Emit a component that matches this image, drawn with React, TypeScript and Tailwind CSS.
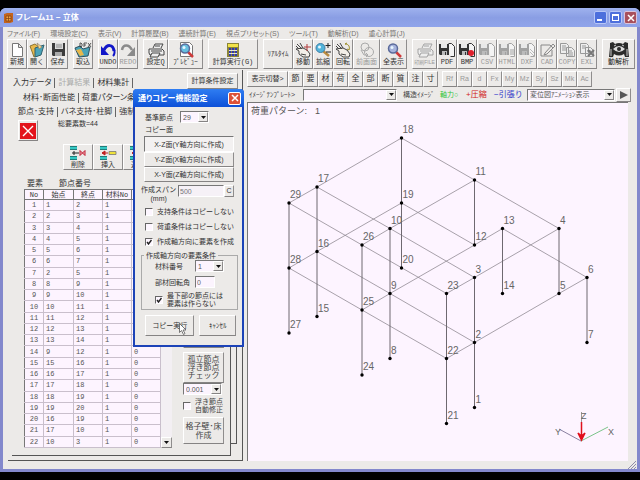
import React from "react";

const cjk = "font-['Liberation_Sans','Noto_Sans_CJK_JP',sans-serif]";
const mono = "font-['Liberation_Mono','Noto_Sans_CJK_JP',monospace]";
const raised = "border border-t-white border-l-white border-r-[#8f8d8d] border-b-[#858383] bg-[#eceae8]";

/* ---------- icons ---------- */

type IconProps = { name: string };

function Floppy({ c = "#333" }: { c?: string }) {
  return (
    <g>
      <path d="M1 2h10v11H2l-1-1z" fill={c} />
      <path d="M3 2h6v4H3z" fill="#e8e8e8" />
      <path d="M4 9h5v4H4z" fill="#bbb" />
      <path d="M7 10h1v3H7z" fill={c} />
    </g>
  );
}

function SheetBehind({ c }: { c: string }) {
  return <path d="M10.500 1.500h3l3 3v10h-4" fill="#f4f4f4" stroke={c} />;
}

function Hand({ children }: { children?: React.ReactNode }) {
  return (
    <g fill="none" stroke="#444" strokeWidth="1">
      <path d="M2 4l3 3M3 2l4 4M6 1l3 5M2 7l3 2v3l4 3h6l1-3-3-4-4-2z" fill="#f3efe8" />
      <path d="M5 4l3 3M7 12l5 1" />
      {children}
    </g>
  );
}

function Icon({ name }: IconProps) {
  const grey = "#a2a2a2";
  let body: React.ReactNode = null;
  switch (name) {
    case "new":
      body = <path d="M4.500 1.500h6l4 4v9h-10zM10.500 1.500v4h4" fill="#fff" stroke="#777" />;
      break;
    case "open":
      body = (
        <g>
          <path d="M2 4l5-2 4 3 1 8-6 2z" fill="#e9b84a" stroke="#8b7435" />
          <path d="M7 6l9-3-3 10-6 2z" fill="#4aa3b8" stroke="#31616e" />
          <path d="M9 1l5 4-3 2z" fill="#f7d88c" stroke="#876" strokeWidth=".6" />
        </g>
      );
      break;
    case "save":
      body = (
        <g>
          <path d="M3 1h13v13H4l-1-1z" fill="#3b3b3b" />
          <path d="M6 1h8v6H6z" fill="#ddd" />
          <path d="M6 10h7v4H6z" fill="#aaa" />
          <path d="M7 3h6M7 5h6" stroke="#777" strokeWidth=".8" />
        </g>
      );
      break;
    case "import":
      body = (
        <g>
          <path d="M1 6l5-2 3 3 7-2-2 9-9 1z" fill="#4aa3b8" stroke="#31515e" />
          <path d="M2 8l4 6 4-1-3-6z" fill="#e9b84a" />
          <path d="M6 1v4h1l1-1V2L7 1zM10 5V1h3M10 3h2M14 1l3 4M17 1l-3 4" fill="none" stroke="#333" strokeWidth=".8" />
        </g>
      );
      break;
    case "undo":
      body = (
        <g fill="none" stroke="#1015c8" strokeWidth="3">
          <path d="M5 8c3-6 9-6 10 1" />
          <path d="M2 4v9h8z" fill="#1015c8" stroke="none" />
          <path d="M15 7c1 3 1 5-1 7" strokeWidth="2" />
        </g>
      );
      break;
    case "redo":
      body = (
        <g fill="none" stroke="#8a8a8a" strokeWidth="2.500">
          <path d="M3 8c1-6 7-6 10 0" />
          <path d="M16 5v9H8z" fill="#8a8a8a" stroke="none" />
        </g>
      );
      break;
    case "print":
    case "print-off": {
      const c = name === "print" ? "#444" : grey;
      body = (
        <g fill="#eee" stroke={c}>
          <path d="M6 6l2-4h8l-2 4M2 7h13l2 2v4H3l-1-2z" />
          <path d="M5 11h8l-2 4H3zM8 4h5M4 9h11" />
        </g>
      );
      break;
    }
    case "preview":
    case "zoomall":
      body = (
        <g>
          {name === "preview" && <path d="M3.500 .5h9l3 3v11h-12z" fill="#fff" stroke="#777" />}
          <path d="M11 10l5 5" stroke="#cf3b3b" strokeWidth="2.500" />
          <circle cx="8" cy="6.500" r="4.500" fill={name === "preview" ? "#67bfe0" : "#a6b3dc"} stroke="#5a6a9a" strokeWidth="1.500" />
          <circle cx="7" cy="5.500" r="1.500" fill="#e7f6ff" />
        </g>
      );
      break;
    case "calc":
      body = (
        <g>
          <path d="M3 1h12v14H3z" fill="#8a8438" />
          <path d="M4 2h10v3H4z" fill="#f2e34a" />
          <path d="M5 7h2M8 7h2M11 7h2M5 10h2M8 10h2M11 10h2M5 13h2M8 13h2M11 13h2" stroke="#3038b0" strokeWidth="2" />
          <path d="M5 8.500h8M5 11.500h8" stroke="#fff" strokeWidth=".8" />
        </g>
      );
      break;
    case "move":
      body = <Hand><path d="M13 2v7M10 5h7" stroke="#b03a3a" /></Hand>;
      break;
    case "rotate":
      body = <Hand><path d="M11 2c4 0 5 3 4 6M11 2l2-1M15 8l-2-1" stroke="#9a8a20" /></Hand>;
      break;
    case "zoom":
      body = (
        <g>
          <path d="M9 9l6 5" stroke="#b88a40" strokeWidth="2.500" />
          <circle cx="6.500" cy="6" r="4.500" fill="#52b4da" stroke="#3f7fa8" />
          <circle cx="5.500" cy="5" r="1.500" fill="#e7f6ff" />
          <path d="M14 1v5M11.500 3.500h5M12 10h5" stroke="#222" />
        </g>
      );
      break;
    case "prev":
      body = (
        <g fill="none" stroke="#aaa">
          <circle cx="7" cy="5" r="4" />
          <circle cx="11" cy="10" r="4.500" />
          <path d="M3 8l3 5h4M8 11l2 2-2 2" />
        </g>
      );
      break;
    case "pdf":
      body = <g><SheetBehind c="#333" /><Floppy c="#333" /></g>;
      break;
    case "bmp":
      body = <g><SheetBehind c="#333" /><Floppy c="#333" /><circle cx="13" cy="11" r="3" fill="#e0202c" /></g>;
      break;
    case "csv":
      body = <g><SheetBehind c={grey} /><Floppy c={grey} /></g>;
      break;
    case "html":
      body = <g><SheetBehind c={grey} /><Floppy c={grey} /><path d="M12 8h4M12 10h4M12 12h4" stroke={grey} /></g>;
      break;
    case "dxf":
      body = <g><SheetBehind c={grey} /><Floppy c={grey} /><path d="M12 7l4 4M12 10l4 4" stroke="#bbb" /></g>;
      break;
    case "cad":
      body = <path d="M3 3h9M3 3v11h11V8M7 11l8-9 2 2-8 8-3 1zM12 3l3 3" fill="none" stroke="#888" />;
      break;
    case "copy":
      body = <path d="M2.500 1.500h6l2 2v8h-8zM8.500 5.500h5l3 3v6h-8zM4 4h4M4 6h4M4 8h4M10 9h4M10 11h5M10 13h5" fill="#eee" stroke="#999" />;
      break;
    case "exl":
      body = (
        <g>
          <path d="M2.500 1.500h6l2 2v8h-8zM7.500 5.500h5l3 3v6h-8zM4 4h4M4 6h4M9 9h4" fill="#eee" stroke="#999" />
          <path d="M10 8l6 6M16 8l-6 6" stroke="#777" strokeWidth="2" />
        </g>
      );
      break;
    case "delete":
    case "insert":
    case "add":
      body = (
        <g>
          <path d="M1 1h7v4H1zM1 11h7v4H1z" fill="#35c8c4" />
          <path d="M1 1.500h7M1 4.500h7M1 11.500h7M1 14.500h7" stroke="#1d6a68" strokeWidth=".8" />
          {name === "delete" ? (
            <g fill="none">
              <path d="M3 8h7M5 6v4" stroke="#222" />
              <path d="M11 5.500v5l5-5v5z" stroke="#c01c30" fill="#f3b0b8" />
            </g>
          ) : (
            <g>
              <path d="M3 8h6M3 8l3-2v4z" stroke="#c02020" fill="#c02020" />
              <path d="M10 6.500h7v3h-7z" fill="#efe23a" stroke="#777" strokeWidth=".8" />
            </g>
          )}
        </g>
      );
      break;
  }
  return (
    <svg viewBox="0 0 18 16" className="h-4 w-[18px] shrink-0" aria-hidden="true">
      {body}
    </svg>
  );
}

/* ---------- shared controls ---------- */

function Select({ label, value, className = "" }: { label: string; value: string; className?: string }) {
  return (
    <div className={`flex items-stretch border border-t-[#777] border-l-[#777] border-r-white border-b-white bg-[#fcf4fe] ${className}`}>
      <select aria-label={label} className="min-w-0 flex-1 appearance-none bg-transparent pl-[2px] text-[7px] leading-[9px] text-[#555] outline-none">
        <option>{value}</option>
      </select>
      <span aria-hidden="true" className={`flex w-[10px] items-center justify-center ${raised}`}>
        <svg viewBox="0 0 5 3" className="h-[3px] w-[5px]"><path d="M0 0h5L2.500 3z" fill="#111" /></svg>
      </span>
    </div>
  );
}

function Check({ label, checked = false, className = "" }: { label: React.ReactNode; checked?: boolean; className?: string }) {
  return (
    <label className={`flex items-center gap-1 ${className}`}>
      <input type="checkbox" defaultChecked={checked} className="peer sr-only" />
      <span className="flex h-2 w-2 shrink-0 items-center justify-center border border-t-[#666] border-l-[#666] border-r-white border-b-white bg-[#fdf6ff] text-transparent peer-checked:text-[#222]">
        <svg viewBox="0 0 6 6" className="h-[6px] w-[6px]"><path d="M1 3l1.500 2L5.500 1" fill="none" stroke="currentColor" strokeWidth="1.400" /></svg>
      </span>
      <span>{label}</span>
    </label>
  );
}

/* ---------- toolbar ---------- */

type Tool = { icon?: string; label: string; w: string; off?: boolean; size?: string };

const toolGroups: Tool[][] = [
  [
    { icon: "new", label: "新規", w: "w-[20px]" },
    { icon: "open", label: "開く", w: "w-[20px]" },
    { icon: "save", label: "保存", w: "w-[21px]" },
  ],
  [{ icon: "import", label: "取込", w: "w-[20px]" }],
  [
    { icon: "undo", label: "UNDO", w: "w-[20px]" },
    { icon: "redo", label: "REDO", w: "w-[20px]", off: true },
  ],
  [
    { icon: "print", label: "設定Q", w: "w-[25px]" },
    { icon: "preview", label: "ﾌﾟﾚﾋﾞｭｰ", w: "w-[35px]" },
  ],
  [{ icon: "calc", label: "計算実行(G)", w: "w-[50px]" }],
  [
    { label: "ﾘｱﾙﾀｲﾑ", w: "w-[30px]" },
    { icon: "move", label: "移動", w: "w-[20px]" },
    { icon: "zoom", label: "拡縮", w: "w-[20px]" },
    { icon: "rotate", label: "回転", w: "w-[20px]" },
    { icon: "prev", label: "前画面", w: "w-[27px]", off: true },
    { icon: "zoomall", label: "全表示", w: "w-[27px]" },
  ],
  [
    { icon: "print-off", label: "印刷FILE", w: "w-[25px]", off: true, size: "text-[5px] font-['Liberation_Sans','Noto_Sans_CJK_JP',sans-serif]" },
    { icon: "pdf", label: "PDF", w: "w-[20px]" },
    { icon: "bmp", label: "BMP", w: "w-[20px]" },
    { icon: "csv", label: "CSV", w: "w-[20px]", off: true },
    { icon: "html", label: "HTML", w: "w-[20px]", off: true },
    { icon: "dxf", label: "DXF", w: "w-[20px]", off: true },
    { icon: "cad", label: "CAD", w: "w-[20px]", off: true },
    { icon: "copy", label: "COPY", w: "w-[20px]", off: true },
    { icon: "exl", label: "EXL", w: "w-[20px]", off: true },
  ],
];

function Toolbar() {
  return (
    <div className={`flex h-[30px] shrink-0 items-stretch gap-[5px] pr-[2px] pl-1 ${mono}`}>
      {toolGroups.map((group, i) => (
        <div key={i} className="flex">
          {group.map((t) => (
            <button
              key={t.label}
              type="button"
              disabled={t.off}
              className={`flex flex-col items-center justify-center leading-[9px] whitespace-nowrap ${t.size ?? "text-[7px]"} ${t.w} ${raised} ${t.off ? "text-[#999]" : "text-[#333]"}`}
            >
              {t.icon && <Icon name={t.icon} />}
              {t.label}
            </button>
          ))}
        </div>
      ))}
      <button type="button" className={`flex flex-1 flex-col items-center justify-center text-[7px] leading-[9px] text-[#222] ${raised}`}>
        <svg viewBox="0 0 24 17" className="h-[17px] w-6" aria-hidden="true">
          <path d="M3 2l3-1 2 2q4-2 8 0l2-2 3 1v4l1 10h-4l-1-3q-5 3-10 0l-1 3H2L3 6z" fill="#2b2b2b" />
          <path d="M6 8q6-6 12 0-6 6-12 0z" fill="#ddd" />
          <path d="M4 8v7M20 8v7M7 5l2-1M17 5l-2-1" stroke="#ccc" />
          <circle cx="12" cy="8" r="2" fill="#2b2b2b" />
        </svg>
        動解析
      </button>
    </div>
  );
}

/* ---------- left pane ---------- */

const elements: [number, number][] = [
  [1, 2], [2, 3], [3, 4], [4, 5], [5, 6], [6, 7], [2, 5], [8, 9], [9, 10], [10, 11], [11, 12],
  [12, 13], [13, 14], [9, 12], [15, 16], [16, 17], [17, 18], [18, 19], [19, 20], [16, 19], [17, 10], [10, 3],
];

function Tab({ children, off = false }: { children: React.ReactNode; off?: boolean }) {
  return (
    <button type="button" disabled={off} className={`border-r border-[#666] pr-[3px] whitespace-nowrap ${off ? "text-[#aaa]" : "text-[#333]"}`}>
      {children}
    </button>
  );
}

function ElementTable() {
  const cell = "border border-[#c9bfcc] p-0 pl-[2px] align-middle";
  const head = "border border-[#777] p-0 font-normal";
  return (
    <div className="flex h-[259px]">
      <table className={`h-[259px] w-[136px] table-fixed border-collapse bg-[#fdf4ff] text-[7px] leading-[8px] text-[#555] ${mono}`}>
        <colgroup>
          <col className="w-[19px]" /><col className="w-[30px]" /><col className="w-[29px]" /><col className="w-[29px]" /><col className="w-[29px]" />
        </colgroup>
        <thead>
          <tr className="h-[10px] whitespace-nowrap text-[#333]">
            <th className={head}>No</th><th className={head}>始点</th><th className={head}>終点</th><th className={head}>材料No</th><th className={head}>角度</th>
          </tr>
        </thead>
        <tbody>
          {elements.map(([a, b], i) => (
            <tr key={i}>
              <td className="border border-[#c9bfcc] border-l-[#777] p-0 text-center">{i + 1}</td>
              <td className={cell}>{a}</td>
              <td className={cell}>{b}</td>
              <td className={cell}>1</td>
              <td className={cell}>0</td>
            </tr>
          ))}
        </tbody>
      </table>
      <div className="flex w-[11px] flex-col justify-end bg-[#f3eff3]">
        <button type="button" aria-label="下へスクロール" className={`flex h-[11px] items-center justify-center ${raised}`}>
          <svg viewBox="0 0 5 3" className="h-[3px] w-[5px]"><path d="M0 0h5L2.500 3z" fill="#111" /></svg>
        </button>
      </div>
    </div>
  );
}

function LeftPane() {
  return (
    <section className="flex w-[244px] shrink-0 flex-col pb-2 pl-[5px] text-[8px] leading-[10px]">
      <div className="flex h-[391px] w-[235px] flex-col border-r border-b border-[#555]">
        <div className="flex h-[21px] items-center gap-[3px] pt-1 pl-[5px] [font-feature-settings:'palt']">
          <Tab>入力データ</Tab>
          <Tab off>計算結果</Tab>
          <Tab>材料集計</Tab>
          <button type="button" className={`mr-1 mb-1 ml-auto h-4 w-[51px] text-[7px] whitespace-nowrap text-[#333] ${raised}`}>計算条件設定</button>
        </div>
        <div className="flex min-h-0 flex-1">
          <div className="mb-1 ml-1 flex w-[219px] flex-col border-r border-b border-[#555]">
            <div className="flex h-[14px] items-center gap-[3px] overflow-hidden pl-[11px] [font-feature-settings:'palt']">
              <Tab>材料･断面性能</Tab>
              <Tab>荷重パターン条件</Tab>
            </div>
            <div className="flex h-[13px] items-center gap-[3px] overflow-hidden pl-[6px] [font-feature-settings:'palt']">
              <Tab>節点･支持</Tab>
              <Tab>バネ支持･柱脚</Tab>
              <Tab>強制変位</Tab>
            </div>
            <div className="flex gap-5 pt-[2px] pl-[6px]">
              <button type="button" aria-label="閉じる" className={`flex h-[21px] w-5 items-center justify-center ${raised}`}>
                <svg viewBox="0 0 16 16" className="h-4 w-4"><path d="M0 0h16v16H0z" fill="#e3141c" /><path d="M3 3l10 10M13 3L3 13" stroke="#fff" strokeWidth="1.400" /></svg>
              </button>
              <span className="text-[7px] leading-[8px] text-[#333]">総要素数=44</span>
            </div>
            <div className="mt-[3px] flex pl-[51px] text-[7px]">
              {[["delete", "削除"], ["insert", "挿入"], ["add", "追加"]].map(([icon, label]) => (
                <button key={icon} type="button" className={`flex h-[26px] w-[30px] flex-col items-center justify-center leading-[8px] text-[#333] ${raised}`}>
                  <Icon name={icon} />
                  {label}
                </button>
              ))}
            </div>
            <div className="flex pt-[9px] pl-[12px]">
              <div className="w-[159px] shrink-0">
                <div className="flex gap-4 pl-[3px] text-[#333]">
                  <span>要素</span><span>節点番号</span>
                </div>
                <ElementTable />
              </div>
              <div className="flex w-[41px] flex-col justify-end pb-1 text-[8px] text-[#444]">
                <button type="button" className={`mb-1 h-[24px] ${raised}`}>接続</button>
                <button type="button" className={`h-[31px] leading-[8px] ${raised}`}>孤立節点<br />浮き節点<br />チェック</button>
                <Select label="許容差" value="0.001" className="h-3 w-[39px]" />
                <Check label={<>浮き節点<br />自動修正</>} className="h-[22px] text-[7px] leading-[8px]" />
                <button type="button" className={`h-[27px] text-[8px] leading-[9px] whitespace-nowrap [font-feature-settings:'palt'] ${raised}`}>格子壁･床<br />作成</button>
              </div>
            </div>
          </div>
          <div className="mb-4 w-[6px] border-r border-b border-[#555]" />
        </div>
      </div>
    </section>
  );
}

/* ---------- right pane ---------- */

const nodes: Record<number, [number, number]> = {
  1: [474.5, 407.5], 2: [474.5, 342.5], 3: [474.5, 277.5], 4: [559, 228.5], 5: [559, 293.5], 6: [587, 277.5], 7: [587, 342.5],
  8: [390, 358.5], 9: [390, 293.5], 10: [390, 228.5], 11: [474.5, 180], 12: [474.5, 245], 13: [502.5, 228.5], 14: [502.5, 293.5],
  15: [317, 316.5], 16: [317, 251.5], 17: [317, 187], 18: [401.5, 138], 19: [401.5, 203], 20: [401.5, 268],
  21: [446.5, 423.5], 22: [446.5, 358.5], 23: [446.5, 293.5], 24: [362, 375], 25: [362, 310], 26: [362, 245],
  27: [289, 333], 28: [289, 268], 29: [289, 203],
};

const chains: number[][] = [
  [4, 11, 18, 17, 29, 26, 23, 3, 4], [17, 10, 3], [11, 10, 26],
  [12, 19, 16, 28, 25, 22, 2, 5, 6, 13, 12, 9, 25], [16, 9, 2],
];

const columns: number[][] = [
  [18, 19, 20], [11, 12], [17, 16, 15], [29, 28, 27], [10, 9, 8], [26, 25, 24], [3, 2, 1], [23, 22, 21], [4, 5], [13, 14], [6, 7],
];

const points = (ids: number[]) => ids.map((n) => nodes[n].join(",")).join(" ");

function FrameModel() {
  return (
    <svg viewBox="248 119 380 341" preserveAspectRatio="xMinYMin meet" className="min-h-0 w-full flex-1" fontFamily="Liberation Sans" fontSize="10" fill="#666">
      {chains.map((c, i) => <polyline key={i} points={points(c)} fill="none" stroke="#928c94" strokeWidth=".8" />)}
      {columns.map((c, i) => <polyline key={i} points={points(c)} fill="none" stroke="#6e6870" />)}
      {Object.entries(nodes).map(([id, [x, y]]) => (
        <g key={id}>
          <circle cx={x} cy={y} r="1.700" fill="#000" />
          <text x={x + 1} y={y - 5}>{id}</text>
        </g>
      ))}
      <path d="M581 441L559 429" stroke="#8a80a0" />
      <path d="M581 441L608 427" stroke="#7bc48a" />
      <path d="M581.500 422v17M578 433l3.500 7 3.500-7-3.500 3z" stroke="#e0101c" strokeWidth="1.500" fill="#e0101c" />
      <path d="M581.500 412v10" stroke="#999" />
      <g fontSize="9">
        <text x="581" y="419">Z</text>
        <text x="555" y="435">Y</text>
        <text x="608" y="435">X</text>
      </g>
    </svg>
  );
}

function RightPane() {
  return (
    <section className="flex min-w-0 flex-1 flex-col pb-2">
      <div className="flex h-[17px] items-stretch pt-[1px] text-[8px] leading-[10px] text-[#333]">
        <span className={`flex w-[41px] items-center justify-center text-[7px] whitespace-nowrap ${raised}`}>表示切替&gt;</span>
        {["節", "要", "材", "荷", "全", "部", "断", "質", "注", "寸"].map((t) => (
          <button key={t} type="button" className={`w-[15px] ${raised}`}>{t}</button>
        ))}
        <span className="w-1" />
        {["Rf", "Ra", "d", "Fx", "My", "Mz", "Sy", "Sz", "Mk", "Ac"].map((t) => (
          <button key={t} type="button" disabled className={`w-[15px] text-[7px] text-[#999] ${raised}`}>{t}</button>
        ))}
      </div>
      <div className="flex h-[15px] items-center text-[7px] leading-[10px] whitespace-nowrap text-[#444]">
        <span className="w-[56px] pl-[2px]">ｲﾒｰｼﾞﾃﾝﾌﾟﾚｰﾄ&gt;</span>
        <Select label="イメージテンプレート" value="" className="h-3 w-[94px]" />
        <span className="w-[43px] pl-[6px]">構造ｲﾒｰｼﾞ</span>
        <span className="w-[26px] text-[#2fc43a]">軸力○</span>
        <span className="w-[28px] text-[8px] text-[#d02020]">+圧縮</span>
        <span className="w-[33px] text-[8px] text-[#3038c8]">−引張り</span>
        <Select label="表示モード" value="変位図ｱﾆﾒｰｼｮﾝ表示" className="h-3 w-[88px]" />
        <button type="button" aria-label="再生" className={`ml-[1px] flex h-[14px] w-[15px] items-center justify-center ${raised}`}>
          <svg viewBox="0 0 8 8" className="h-2 w-2"><path d="M0 0l8 4-8 4z" fill="#555" /></svg>
        </button>
      </div>
      <div className="mr-[9px] flex min-h-0 flex-1 flex-col border-t border-l border-[#777] bg-[#fdf4ff]">
        <p className="flex h-4 items-center gap-2 pl-[3px] text-[9px] leading-3 text-[#555]"><span>荷重パターン:</span><span>1</span></p>
        <FrameModel />
      </div>
    </section>
  );
}

/* ---------- floating dialog ---------- */

function CopyDialog() {
  return (
    <div role="dialog" aria-label="通りコピー機能設定" className="absolute top-[89px] left-[133px] z-10 flex w-[111px] flex-col rounded-t border-2 border-t-0 border-[#1c43b8] bg-[#eceae8] text-[7px] leading-[9px] text-[#333]">
      <div className="-mx-[2px] flex h-[18px] items-center justify-between rounded-t bg-linear-to-b from-[#2f7df2] to-[#0d50d8] pr-[3px] pl-[5px] text-[8px] font-bold whitespace-nowrap text-white">
        <span className="[font-feature-settings:'palt']">通りコピー機能設定</span>
        <button type="button" aria-label="閉じる" className="flex h-[13px] w-[13px] items-center justify-center rounded-xs border border-white bg-[#dd5238]">
          <svg viewBox="0 0 8 8" className="h-2 w-2"><path d="M1 1l6 6M7 1L1 7" stroke="#fff" strokeWidth="1.500" /></svg>
        </button>
      </div>
      <div className="flex flex-col px-[6px] pt-1 pb-[9px]">
        <div className="flex items-center gap-[7px] pl-1">
          <span className="w-[28px]">基準節点</span>
          <Select label="基準節点" value="29" className="h-3 w-[29px]" />
        </div>
        <p className="py-[2px] pl-1">コピー面</p>
        <div className="flex flex-col pr-[2px] pl-[3px]">
          <button type="button" aria-pressed="true" className="h-4 border border-t-[#777] border-l-[#777] border-r-white border-b-white bg-[#f3f1f1] whitespace-nowrap">X-Z面(Y軸方向に作成)</button>
          <button type="button" className={`h-[15px] whitespace-nowrap ${raised}`}>Y-Z面(X軸方向に作成)</button>
          <button type="button" className={`h-[15px] whitespace-nowrap ${raised}`}>X-Y面(Z軸方向に作成)</button>
        </div>
        <div className="flex items-start justify-between pt-[3px] pr-[2px]">
          <label htmlFor="span" className="text-center">作成スパン<br />(mm)</label>
          <div className="flex h-3 w-[56px]">
            <input id="span" defaultValue="500" className="w-[46px] border border-t-[#777] border-l-[#777] border-r-white border-b-white bg-[#f6f1f7] pl-[1px] text-[#777]" />
            <button type="button" className={`w-[10px] leading-[8px] ${raised}`}>C</button>
          </div>
        </div>
        <Check label="支持条件はコピーしない" className="mt-[1px] ml-1 h-[15px] whitespace-nowrap" />
        <Check label="荷重条件はコピーしない" className="ml-1 h-[15px] whitespace-nowrap" />
        <Check label="作成軸方向に要素を作成" checked className="ml-1 h-[15px] whitespace-nowrap" />
        <fieldset className="mt-[2px] flex h-[59px] flex-col gap-1 border border-[#aaa] px-[13px]">
          <legend className="-ml-[11px] px-[2px]">作成軸方向の要素条件</legend>
          <div className="flex items-center">
            <span className="w-10">材料番号</span>
            <Select label="材料番号" value="1" className="h-3 w-[29px]" />
          </div>
          <div className="flex items-center">
            <label htmlFor="angle" className="w-10">部材回転角</label>
            <input id="angle" defaultValue="0" className="h-3 w-5 border border-t-[#777] border-l-[#777] border-r-white border-b-white bg-[#fcf4fe] pl-[1px] text-[#666]" />
          </div>
          <Check checked label={<>最下部の節点には<br />要素は作らない</>} className="h-4 leading-[8px] whitespace-nowrap" />
        </fieldset>
        <div className="flex gap-[5px] pt-[5px] pl-1">
          <button type="button" className={`relative h-[21px] w-[50px] ${raised}`}>
            コピー実行
            <svg viewBox="0 0 8 12" className="absolute top-[7px] left-[33px] h-3 w-2" aria-hidden="true">
              <path d="M.5.5v9l2-2 2 4 1.500-1-2-3.500h3z" fill="#fff" stroke="#555" strokeWidth=".8" />
            </svg>
          </button>
          <button type="button" className={`h-[21px] w-[37px] ${raised}`}>ｷｬﾝｾﾙ</button>
        </div>
      </div>
    </div>
  );
}

/* ---------- window ---------- */

export default function App() {
  return (
    <div className={`relative flex h-screen min-w-[640px] flex-col bg-black pt-2 pb-2 ${cjk}`}>
      <div className="flex min-h-0 flex-1 flex-col rounded-t-md border-x-[3px] border-b-[3px] border-[#8388cc] bg-[#eceae8]">
        <header className="-mx-[3px] flex h-[19px] shrink-0 items-center gap-[3px] rounded-t-md bg-linear-to-b from-[#9fb2ee] via-[#8a9ee4] to-[#90a4ea] pr-[3px] pl-1 text-white">
          <svg viewBox="0 0 9 10" className="h-[10px] w-[9px]" aria-hidden="true"><path d="M0 1l3-1h6v9l-3 1H0z" fill="#c4641c" /><path d="M2 3h5v5H2zM2 5.500h5M4.500 3v5" fill="#f1a441" stroke="#7c3c10" strokeWidth=".7" /></svg>
          <h1 className="flex-1 text-[8px] leading-3 font-bold [font-feature-settings:'palt']">フレーム11 − 立体</h1>
          <div className="flex gap-[2px]">
            <button type="button" aria-label="最小化" className="flex h-[13px] w-[13px] items-end rounded-xs border border-[#b7c6f7] bg-[#4d6fdc] p-[2px]"><span className="h-[2px] w-[5px] bg-white" /></button>
            <button type="button" aria-label="最大化" className="h-[13px] w-[13px] rounded-xs border border-[#b7c6f7] bg-[#4d6fdc] p-[2px]"><span className="block h-[7px] w-[7px] border border-t-2 border-white" /></button>
            <button type="button" aria-label="閉じる" className="flex h-[13px] w-[13px] items-center justify-center rounded-xs border border-[#d8c4dc] bg-[#a8505c]">
              <svg viewBox="0 0 8 8" className="h-2 w-2"><path d="M1 1l6 6M7 1L1 7" stroke="#fff" strokeWidth="1.500" /></svg>
            </button>
          </div>
        </header>
        <nav className="flex h-3 shrink-0 items-center gap-[10px] pt-[1px] pl-1 text-[7px] leading-[10px] whitespace-nowrap text-[#777573] [font-feature-settings:'palt']">
          {["ファイル(F)", "環境設定(C)", "表示(V)", "計算履歴(B)", "連続計算(E)", "視点プリセット(S)", "ツール(T)", "動解析(D)", "重心計算(J)"].map((m) => (
            <button key={m} type="button">{m}</button>
          ))}
        </nav>
        <Toolbar />
        <main className="flex min-h-0 flex-1 pt-[1px]">
          <LeftPane />
          <RightPane />
        </main>
      </div>
      <CopyDialog />
      <svg viewBox="0 0 8 8" className="absolute right-1 bottom-[11px] h-2 w-2" aria-hidden="true">
        <path d="M8 0L0 8M8 3L3 8M8 6L6 8" stroke="#8f8da8" />
      </svg>
    </div>
  );
}
